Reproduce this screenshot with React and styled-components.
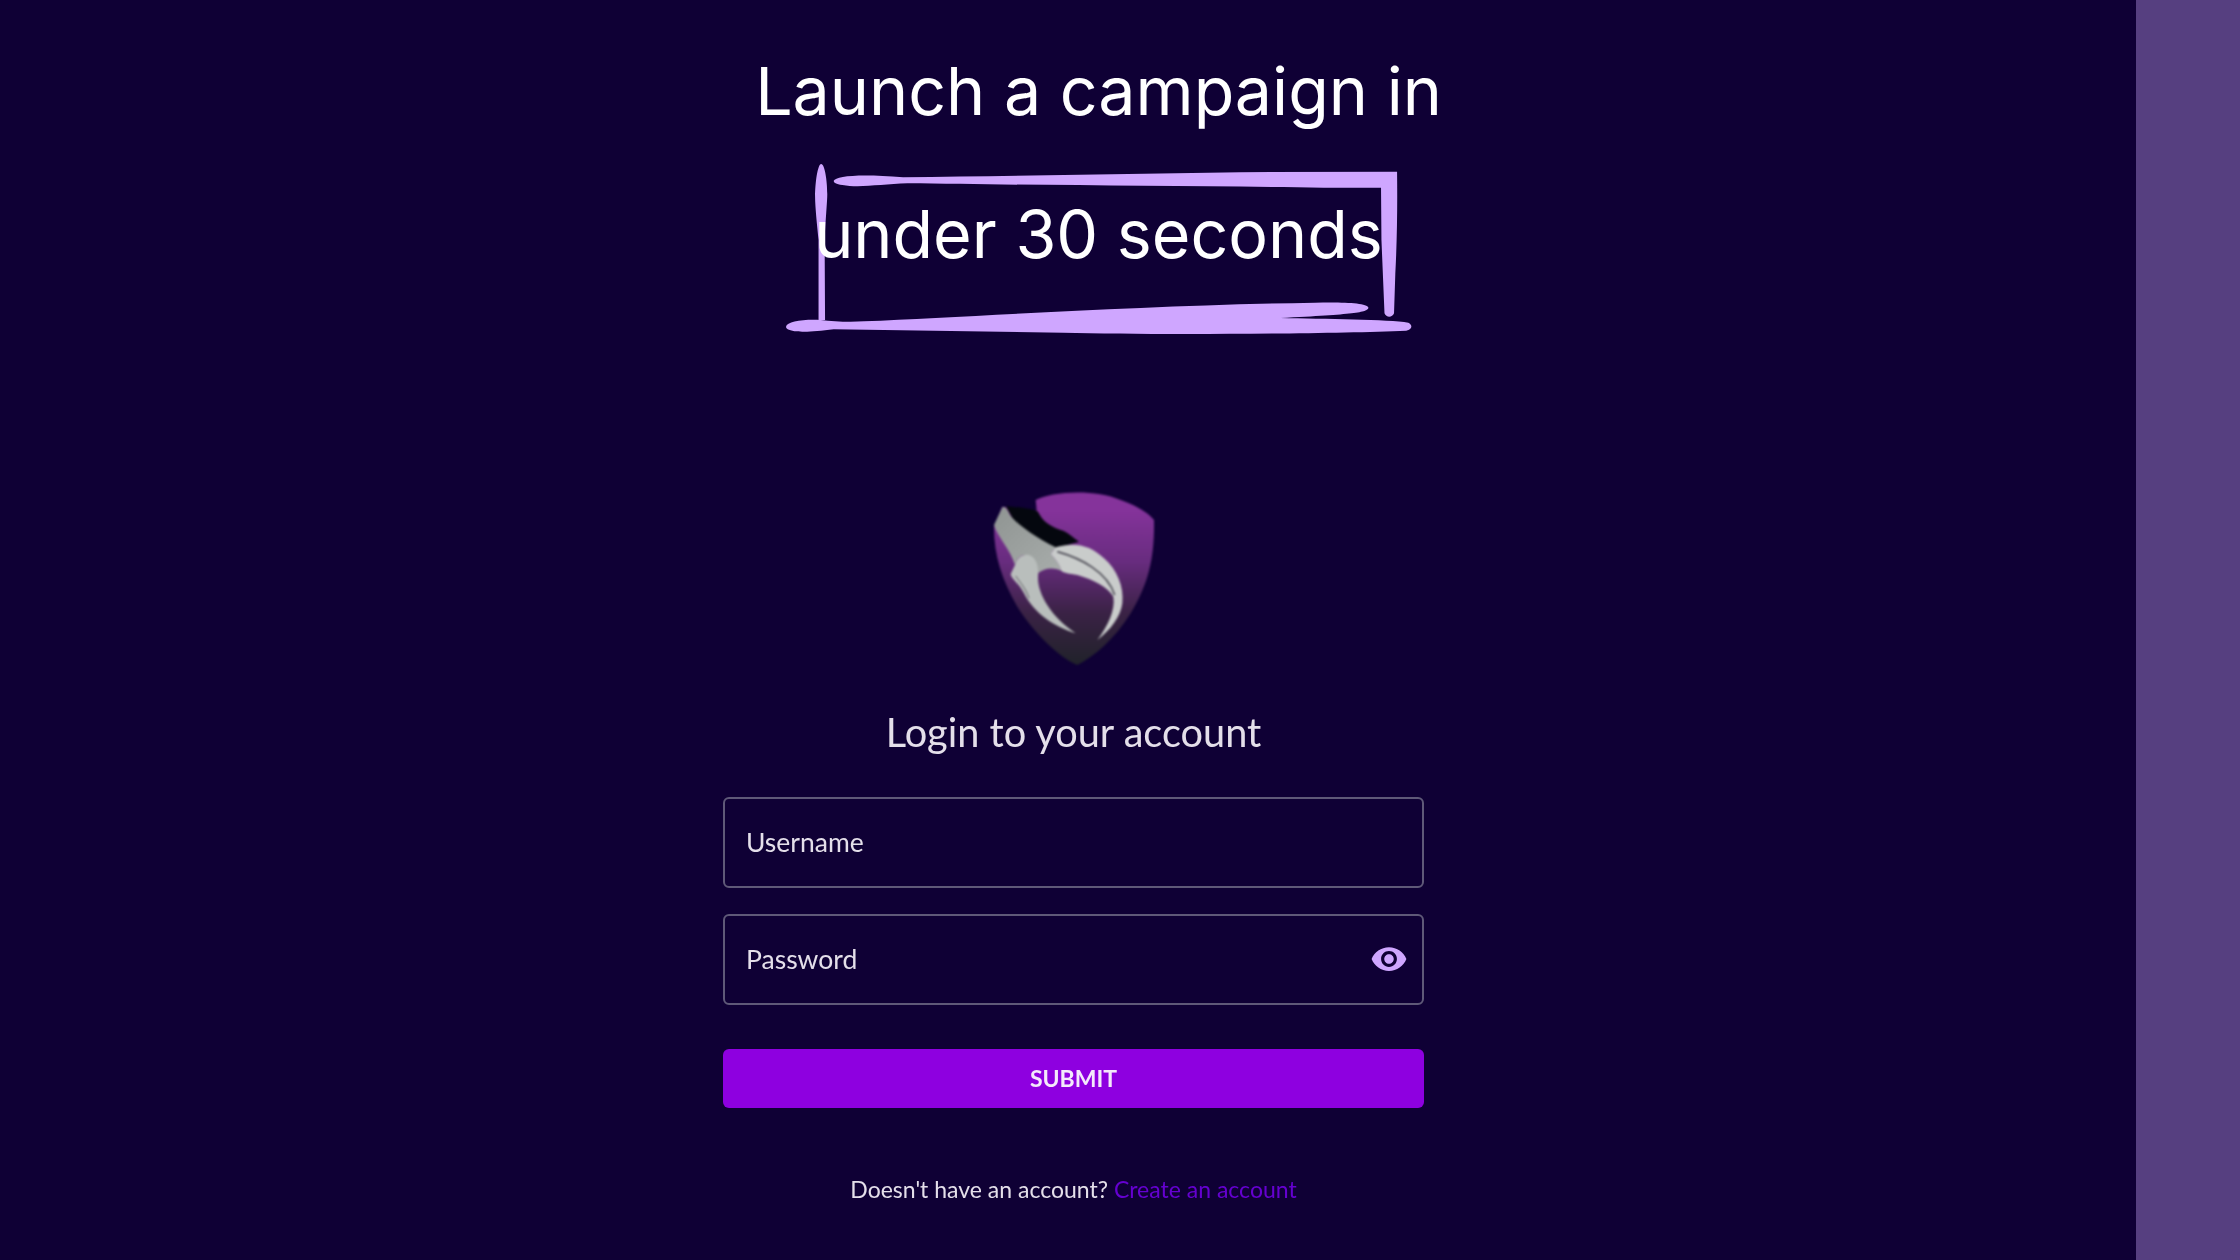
import React from 'react';
import styled, { createGlobalStyle } from 'styled-components';
import { MdVisibility } from 'react-icons/md';

const GlobalStyle = createGlobalStyle`
html, body {
    margin: 0;
    padding: 0;
    background: #0f0035;
}
* {
    box-sizing: border-box;
}
`

const Page = styled.div`
display: flex;
height: 1260px;
overflow: hidden;
background: #0f0035;
`

const Main = styled.main`
flex: 1;
display: flex;
flex-direction: column;
align-items: center;
`

const Aside = styled.aside`
width: 104px;
background: #563f80;
`

const Headline = styled.h1`
margin: 20px 0 0 61px;
font-family: Inter, "Liberation Sans", sans-serif;
font-size: 66.3px;
font-weight: 400;
line-height: 143px;
color: #fff;
text-align: center;
`

const HeadlineLine = styled.span`
display: block;
`

const Marked = styled.span`
position: relative;
display: inline-block;
`

const MarkedText = styled.span`
position: relative;
`

const Scribble = styled.svg`
position: absolute;
left: -54px;
top: -23px;
width: 680px;
height: 220px;
`

const Panel = styled.div`
width: 701px;
margin-left: 11px;
margin-top: 164px;
display: flex;
flex-direction: column;
align-items: stretch;
font-family: Lato, "Liberation Sans", sans-serif;
filter: blur(0.4px);
`

const Logo = styled.svg`
width: 220px;
height: 220px;
align-self: center;
filter: blur(1px);
`

const Title = styled.h2`
margin: 18px 0 41px;
font-size: 39.7px;
font-weight: 400;
line-height: 48px;
color: #e4dfea;
text-align: center;
`

const Field = styled.label`
display: flex;
align-items: center;
height: 91px;
padding: 0 14px 2px 21px;
border: 2px solid #5f5978;
border-radius: 6px;
margin-bottom: 26px;
`

const Input = styled.input`
flex: 1;
min-width: 0;
border: 0;
outline: 0;
padding: 0;
background: transparent;
font-family: inherit;
font-size: 26.5px;
color: #e4dfea;
&::placeholder {
    color: #e4dfea;
    opacity: 1;
}
`

const EyeIcon = styled(MdVisibility)`
flex: none;
width: 38px;
height: 38px;
color: #cfa6ff;
`

const Submit = styled.button`
height: 59px;
margin-top: 18px;
padding: 0 0 2px;
border: 0;
border-radius: 6px;
background: #8e00e0;
color: #f4e9fb;
font-family: inherit;
font-size: 23px;
font-weight: 700;
`

const Footer = styled.p`
margin: 66px 0 0;
font-size: 23px;
line-height: 30px;
color: #e4dfea;
text-align: center;
`

const FooterLink = styled.a`
color: #6500d0;
`

const App = () => {
    return (
        <Page>
            <GlobalStyle />
            <Main>
                <Headline>
                    <HeadlineLine>Launch a campaign in</HeadlineLine>
                    <HeadlineLine>
                        <Marked>
                            <Scribble viewBox="0 0 1568 660" preserveAspectRatio="none" fill="#cfa6ff">
                                <path d="M141 72C150 72 156 130 155 170C154 200 150 260 149 300L150 540L135 540L135 300C132 260 127 200 127 170C127 130 133 72 141 72Z" />
                                <path d="M170 122C175 108 230 100 330 112C600 108 900 100 1180 96L1469 95C1470 200 1469 300 1465 400L1462 520C1458 534 1444 534 1440 520L1433 300L1432 143L1300 143C1000 138 600 135 340 130C280 132 230 145 190 135C175 132 170 128 170 122Z" />
                                <path d="M60 560C62 545 100 537 140 540C170 545 210 547 240 544C500 530 900 495 1280 488C1340 486 1400 488 1403 503C1400 518 1370 522 1200 534C1300 537 1450 538 1495 548C1505 555 1505 568 1490 572C1300 582 900 585 700 578L170 568C130 575 100 577 85 574C70 572 60 568 60 560Z" />
                            </Scribble>
                            <MarkedText>under 30 seconds</MarkedText>
                        </Marked>
                    </HeadlineLine>
                </Headline>
                <Panel>
                    <Logo viewBox="10 0 660 660">
                        <defs>
                            <linearGradient id="shieldFill" x1="0" y1="0" x2="0" y2="1">
                                <stop offset="0.1" stopColor="#85339b" />
                                <stop offset="0.4" stopColor="#682c7f" />
                                <stop offset="0.7" stopColor="#3a2245" />
                                <stop offset="1" stopColor="#20222a" />
                            </linearGradient>
                            <linearGradient id="clawFill" x1="0" y1="0" x2="1" y2="1">
                                <stop offset="0" stopColor="#8f9492" />
                                <stop offset="1" stopColor="#a8adab" />
                            </linearGradient>
                        </defs>
                        <path fill="url(#shieldFill)" d="M225 90C270 65 400 55 480 90C530 108 565 130 580 150C582 260 565 340 510 430C460 510 400 560 350 585C300 565 220 490 170 410C125 330 100 260 100 170L125 110L228 122Z" />
                        <path fill="#04070e" d="M135 108C170 112 215 115 232 125C245 150 260 165 300 180C320 185 340 205 355 215L285 235L180 190Z" />
                        <path fill="url(#clawFill)" d="M100 165L125 112C133 108 140 118 148 135C170 165 230 205 285 232L270 252C285 268 298 285 302 302C275 290 250 295 232 310C228 280 215 260 190 255C175 258 168 268 163 285C150 240 110 200 100 165Z" />
                        <path fill="#c9cccb" d="M285 232C340 215 390 225 430 265C470 300 490 350 485 400C480 440 450 480 410 510C440 470 465 420 458 380C440 350 400 330 350 315C325 310 310 310 302 302C298 285 285 268 270 252Z" />
                        <path fill="none" stroke="#1d1a28" strokeWidth="5" strokeOpacity="0.7" d="M290 245C360 265 440 305 462 375" />
                        <path fill="#b9bebc" d="M163 285C170 262 185 252 205 255C225 262 235 285 232 320C230 370 270 440 345 490C280 470 220 430 190 370C175 340 150 325 150 312Z" />
                        <path fill="none" stroke="#3a3840" strokeWidth="3" strokeOpacity="0.7" d="M165 318C180 340 195 355 205 385" />
                    </Logo>
                    <Title>Login to your account</Title>
                    <Field>
                        <Input placeholder="Username" />
                    </Field>
                    <Field>
                        <Input placeholder="Password" />
                        <EyeIcon />
                    </Field>
                    <Submit>SUBMIT</Submit>
                    <Footer>
                        Doesn't have an account? <FooterLink>Create an account</FooterLink>
                    </Footer>
                </Panel>
            </Main>
            <Aside />
        </Page>
    );
};

export default App;
